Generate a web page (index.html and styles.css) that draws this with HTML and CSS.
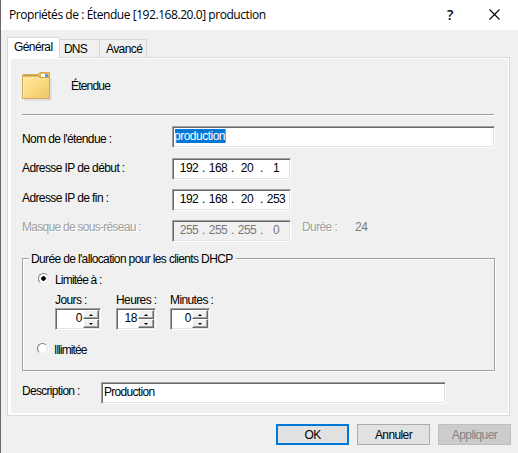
FILE: index.html
```html
<!DOCTYPE html>
<html lang="fr">
<head>
<meta charset="utf-8">
<title>Propriétés de : Étendue</title>
<link rel="stylesheet" href="styles.css">
</head>
<body>
<div class="dialog">
  <header class="titlebar">
    <span class="title">Propriétés de : Étendue [192.168.20.0] production</span>
    <span class="help">?</span>
    <svg class="close" width="11" height="11" viewBox="0 0 11 11"><path d="M.5.5l10 10M10.5.5l-10 10" stroke="#000" stroke-width="1.1" fill="none"/></svg>
  </header>
  <nav class="tabs">
    <span class="tab active">Général</span>
    <span class="tab dns">DNS</span>
    <span class="tab adv">Avancé</span>
  </nav>
  <main class="panel">
    <div class="heading">
      <svg width="30" height="29" viewBox="0 0 30 29">
        <defs><linearGradient id="f" x1="0" y1="0" x2="1" y2="1"><stop offset="0" stop-color="#ffe9a0"/><stop offset=".5" stop-color="#fbda82"/><stop offset="1" stop-color="#edc565"/></linearGradient></defs>
        <path d="M2 28h27V6" fill="none" stroke="#d2d2d2"/>
        <path d="M.5 3.500Q.5 2.500 1.500 2.500H16L18 .5H27.500V26.500H.5z" fill="#e3bd62" stroke="#cfaa58"/>
        <path d="M19 2h7v3h-7z" fill="#fff"/><path d="M23 2h3v3h-3z" fill="#609bea"/>
        <path d="M1 5.500H16L18.500 6.500H27V26H1z" fill="url(#f)"/>
        <path d="M1.500 26V5.500H16L18.500 6.500H27" fill="none" stroke="#fff0b8" stroke-width=".6"/>
        <path d="M1 3.500h15l2 2h9" fill="none" stroke="#b98f3c" stroke-width=".7"/>
      </svg>
      <span class="name">Étendue</span>
    </div>
    <div class="rule"></div>
    <div class="row r1"><label class="l1">Nom de l'étendue :</label><div class="field wide"><span class="sel">production</span></div></div>
    <div class="row r2"><label class="l2">Adresse IP de début :</label><div class="field ip"><b>192</b><i>.</i><b>168</b><i>.</i><b>20</b><i>.</i><b>1</b></div></div>
    <div class="row r3"><label class="l3">Adresse IP de fin :</label><div class="field ip"><b>192</b><i>.</i><b>168</b><i>.</i><b>20</b><i>.</i><b>253</b></div></div>
    <div class="row r4 off"><label class="l4">Masque de sous-réseau :</label><div class="field ip"><b>255</b><i>.</i><b>255</b><i>.</i><b>255</b><i>.</i><b>0</b></div><span class="dur">Durée :</span><span class="bits">24</span></div>
    <fieldset class="group">
      <legend><span>Durée de l'allocation pour les clients DHCP</span></legend>
      <div class="choice limited"><span class="radio on"></span><span class="lim">Limitée à :</span></div>
      <div class="spins">
        <div class="unit days"><span>Jours :</span><div class="field spin"><b>0</b><div class="arrows"><u class="up"></u><u class="down"></u></div></div></div>
        <div class="unit hours"><span>Heures :</span><div class="field spin"><b>18</b><div class="arrows"><u class="up"></u><u class="down"></u></div></div></div>
        <div class="unit mins"><span>Minutes :</span><div class="field spin"><b>0</b><div class="arrows"><u class="up"></u><u class="down"></u></div></div></div>
      </div>
      <div class="choice unlimited"><span class="radio"></span><span class="unl">Illimitée</span></div>
    </fieldset>
    <div class="row r5"><label class="l5">Description :</label><div class="field desc">Production</div></div>
  </main>
  <footer class="buttons"><button class="ok">OK</button><button>Annuler</button><button disabled>Appliquer</button></footer>
</div>
</body>
</html>
```
FILE: styles.css
```css
* { box-sizing: border-box; }
body { margin: 0; }
.dialog { width: 518px; height: 453px; overflow: hidden; background: #f0f0f0; border-left: 1px solid #696969; color: #000; font: 12px/14px "Liberation Sans", sans-serif; letter-spacing: -.6px; white-space: nowrap; display: flex; flex-direction: column; }
.titlebar { height: 30px; flex: none; background: #fff; display: flex; align-items: center; padding-left: 8px; font-family: "Open Sans", sans-serif; letter-spacing: -.44px; }
.title { width: 438px; }
.help { width: 42px; font-size: 14px; font-weight: 600; }
.close { margin-top: -2px; }
.tabs { height: 27px; flex: none; display: flex; align-items: flex-end; padding-left: 6px; }
.tab { height: 18px; border: 1px solid #d9d9d9; border-bottom: 0; padding-top: 2px; }
.active { position: relative; top: 1px; height: 21px; width: 53px; background: #fff; padding-left: 6px; z-index: 1; }
.dns { width: 41px; margin-left: -1px; padding-left: 4px; letter-spacing: -.8px; }
.adv { width: 48px; margin-left: -1px; padding-left: 6px; }
.panel { width: 503px; height: 359px; flex: none; margin-left: 6px; border: 1px solid #d9d9d9; box-shadow: inset 3px 0 #fff, inset -1px 0 #fff, inset 0 1px #fff, inset 0 -2px #fff; padding: 14px 13px 0 14px; }
.heading { display: flex; height: 42px; }
.name { margin: 7px 0 0 19px; letter-spacing: -.8px; }
.rule { width: 472px; height: 2px; background: #a0a0a0; border-bottom: 1px solid #fff; }
.row { display: flex; height: 22px; }
.row label { width: 150px; padding-top: 6px; flex: none; }
.field { height: 22px; background: #fff; border: 1px solid; border-color: #a0a0a0 #fff #fff #a0a0a0; box-shadow: inset 1px 1px #696969, inset -1px -1px #e3e3e3; }
.wide { width: 323px; padding: 2px; }
.sel { display: block; width: 51px; height: 14px; overflow: hidden; background: #0078d7; border-right: 1px solid #e88b38; color: #fff; letter-spacing: -.5px; text-indent: -1px; }
.r1 { margin-top: 10px; }
.r2 { margin-top: 10px; }
.r3 { margin-top: 9px; }
.r4 { margin-top: 9px; }
.row.r2 label { padding-top: 3px; }
.row.r3 label { padding-top: 2px; }
.row.r4 label { padding-top: 0; letter-spacing: -.72px; }
.ip { width: 119px; display: flex; padding: 2px 0 0 4px; letter-spacing: -.45px; }
.ip b { width: 24px; text-align: center; font-weight: 400; }
.ip i { width: 5px; font-style: normal; text-align: center; }
.off { color: #a0a0a0; }
.off > label, .dur { text-shadow: 1px 1px #fff; }
.off .field { background: #f0f0f0; color: #787878; }
.dur { margin-left: 11px; width: 53px; }
.bits { color: #787878; letter-spacing: -.45px; }
.group { position: relative; width: 473px; height: 113px; margin: 16px 0 0; padding: 0; border: 1px solid #a0a0a0; box-shadow: 1px 1px #fff, inset 1px 1px #fff; display: flex; flex-direction: column; min-width: 0; }
.group legend { position: absolute; left: 6px; top: -7px; width: 207px; padding: 0 0 0 2px; height: 14px; background: #f0f0f0; letter-spacing: -.64px; }
.choice { display: flex; }
.limited { margin: 14px 0 0 15px; }
.lim { margin-left: 6px; letter-spacing: -.8px; }
.radio { width: 11px; height: 11px; border-radius: 50%; background: #fff; border: 1px solid; border-color: #808080 #e3e3e3 #e3e3e3 #808080; box-shadow: 1px 1px #fff; }
.on { background: radial-gradient(circle at 50% 50%, #000 0 2px, #fff 2.5px); }
.spins { display: flex; margin: 6px 0 0 32px; }
.unit { display: flex; flex-direction: column; height: 37px; justify-content: space-between; }
.days { width: 61px; }
.hours { width: 54px; }
.spin { display: flex; justify-content: flex-end; width: 40px; padding: 1px; letter-spacing: -.45px; }
.days .spin { width: 46px; }
.spin b { font-weight: 400; padding-top: 1px; }
.arrows { width: 16px; height: 20px; flex: none; margin-left: 1px; }
.arrows u { display: flex; width: 16px; height: 9px; background: #f0f0f0; border: 1px solid; border-color: #fff #696969 #696969 #fff; box-shadow: inset -1px -1px #a0a0a0; align-items: center; justify-content: center; }
.up::after, .down::after { content: ""; border: solid transparent; border-width: 0 2px 2px; border-bottom-color: #000; }
.down::after { border-width: 2px 2px 0; border-top-color: #000; }
.unlimited { margin: 13px 0 0 14px; }
.unl { margin-left: 6px; letter-spacing: -.8px; }
.unlimited .unl { letter-spacing: -.9px; }
.r5 { margin-top: 11px; }
.row.r5 label { width: 79px; padding-top: 2px; letter-spacing: -.7px; }
.desc { width: 345px; padding: 2px 0 0 2px; letter-spacing: -.7px; }
.buttons { display: flex; gap: 8px; margin: 8px 0 0 275px; }
button { width: 73px; height: 21px; padding: 0; font: inherit; letter-spacing: inherit; background: #e1e1e1; border: 1px solid #adadad; color: #000; }
.ok { border: 2px solid #0078d7; }
button:disabled { background: #ccc; border-color: #bfbfbf; color: #838383; }
```
